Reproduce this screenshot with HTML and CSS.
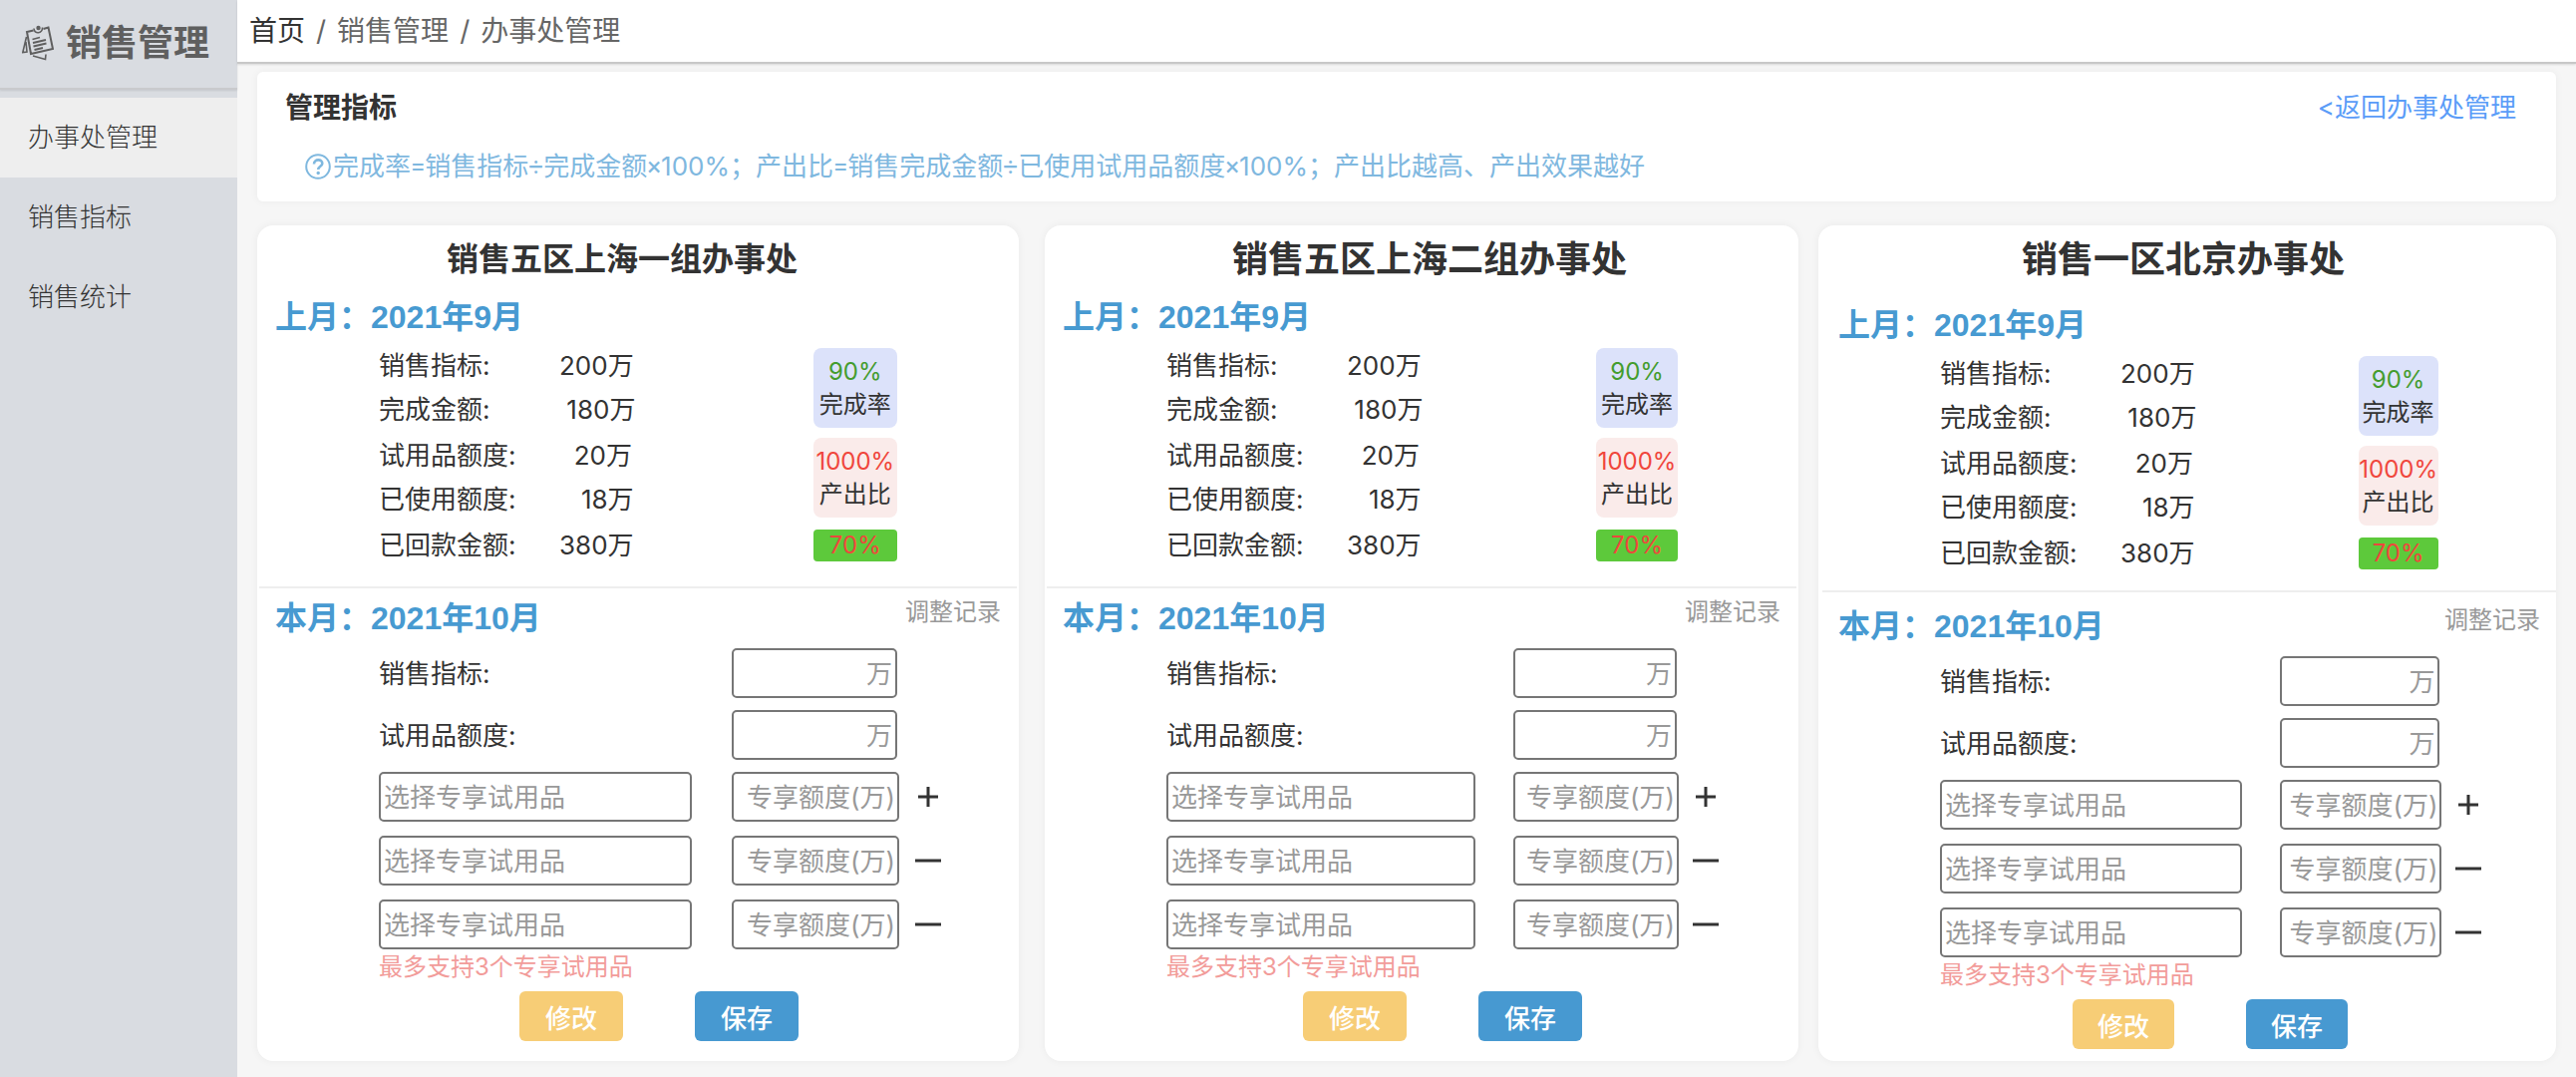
FILE: index.html
```html
<!DOCTYPE html>
<html lang="zh-CN">
<head>
<meta charset="utf-8">
<meta name="viewport" content="width=device-width, initial-scale=1">
<title>办事处管理</title>
<link rel="stylesheet" href="styles.css">
</head>
<body>
<svg width="0" height="0" class="sprite" aria-hidden="true">
  <symbol id="plus" viewBox="0 0 26 26"><path d="M3 13H23M13 3V23" stroke="currentColor" stroke-width="3" fill="none"/></symbol>
  <symbol id="minus" viewBox="0 0 26 26"><path d="M0 13H26" stroke="currentColor" stroke-width="3" fill="none"/></symbol>
</svg>
<div class="layout">
  <aside class="sidebar">
    <div class="brand">
      <svg class="brand-icon" viewBox="0 0 32 36" fill="none" stroke="currentColor" stroke-width="2" aria-hidden="true">
        <path d="M11.5 5.5L5 7L9 29L31 24L26.500 2.500L21.500 4"/>
        <path d="M12 3.500C12 9.500 21 9 20.500 2.500" stroke-width="1.600"/>
        <circle cx="16.500" cy="3" r="2.200" fill="currentColor" stroke="none"/>
        <path d="M10.500 14.500L18 12.500M11 18L24 15M11.500 21.500L24.500 18.500M12.500 25L21 23" stroke-width="1.800"/>
        <path d="M4.500 12L0.800 27.500L5 27L4 17" stroke-width="1.600"/>
        <path d="M11 31L23.500 34.500L24 29.500" stroke-width="1.600"/>
      </svg>
      <span class="brand-name">销售管理</span>
    </div>
    <nav class="menu">
      <a class="menu-item menu-item-active" href="#">办事处管理</a>
      <a class="menu-item" href="#">销售指标</a>
      <a class="menu-item" href="#">销售统计</a>
    </nav>
  </aside>
  <div class="content">
    <nav class="breadcrumb">
      <a class="crumb-home" href="#">首页</a><span>/</span><a href="#">销售管理</a><span>/</span><span>办事处管理</span>
    </nav>
    <main class="main">
      <section class="panel">
        <div class="panel-head">
          <h1 class="panel-title">管理指标</h1>
          <a class="back" href="#">&lt;返回办事处管理</a>
        </div>
        <p class="formula">
          <svg class="help-icon" viewBox="0 0 26 26" fill="none" stroke="currentColor" aria-hidden="true">
            <circle cx="13" cy="13" r="11.800" stroke-width="2"/>
            <path d="M9 10.500C9 5 17.500 5.200 17.300 10C17.200 12.800 13.200 12.800 13.200 16" stroke-width="2.600"/>
            <circle cx="13.200" cy="19.500" r="1.700" fill="currentColor" stroke="none"/>
          </svg><span>完成率<span class="op">=</span>销售指标<span class="op">÷</span>完成金额<span class="op">×</span>100%；产出比<span class="op">=</span>销售完成金额<span class="op">÷</span>已使用试用品额度<span class="op">×</span>100%；产出比越高、产出效果越好</span>
        </p>
      </section>

      <div class="cards">
        <article class="card card-first">
          <h2 class="card-title">销售五区上海一组办事处</h2>
          <h3 class="month">上月：2021年9月</h3>
          <div class="stats">
            <div class="group">
              <dl class="pairs"><dt>销售指标:</dt><dd>200万</dd><dt>完成金额:</dt><dd>&nbsp;180万</dd></dl>
              <div class="badge badge-done"><strong>90%</strong><span>完成率</span></div>
            </div>
            <div class="group">
              <dl class="pairs"><dt>试用品额度:</dt><dd>&nbsp;&nbsp;20万</dd><dt>已使用额度:</dt><dd>&nbsp;&nbsp;&nbsp;18万</dd></dl>
              <div class="badge badge-output"><strong>1000%</strong><span>产出比</span></div>
            </div>
            <div class="group">
              <dl class="pairs"><dt>已回款金额:</dt><dd>380万</dd></dl>
              <div class="badge-paid">70%</div>
            </div>
          </div>
          <form class="current">
            <div class="current-head"><h3 class="month-now">本月：2021年10月</h3><a class="log" href="#">调整记录</a></div>
            <div class="field"><label for="t1">销售指标:</label><input class="amount" id="t1" type="text" placeholder="万"></div>
            <div class="field"><label for="q1">试用品额度:</label><input class="amount" id="q1" type="text" placeholder="万"></div>
            <div class="samples">
              <div class="field"><input type="text" aria-label="专享试用品" placeholder="选择专享试用品"><input class="quota" type="text" aria-label="专享额度" placeholder="专享额度(万)"><button class="step" type="button" aria-label="添加"><svg><use href="#plus"/></svg></button></div>
              <div class="field"><input type="text" aria-label="专享试用品" placeholder="选择专享试用品"><input class="quota" type="text" aria-label="专享额度" placeholder="专享额度(万)"><button class="step" type="button" aria-label="删除"><svg><use href="#minus"/></svg></button></div>
              <div class="field"><input type="text" aria-label="专享试用品" placeholder="选择专享试用品"><input class="quota" type="text" aria-label="专享额度" placeholder="专享额度(万)"><button class="step" type="button" aria-label="删除"><svg><use href="#minus"/></svg></button></div>
            </div>
            <p class="limit">最多支持3个专享试用品</p>
            <div class="actions"><button class="btn btn-edit" type="button">修改</button><button class="btn btn-save" type="button">保存</button></div>
          </form>
        </article>

        <article class="card card-second">
          <h2 class="card-title">销售五区上海二组办事处</h2>
          <h3 class="month">上月：2021年9月</h3>
          <div class="stats">
            <div class="group">
              <dl class="pairs"><dt>销售指标:</dt><dd>200万</dd><dt>完成金额:</dt><dd>&nbsp;180万</dd></dl>
              <div class="badge badge-done"><strong>90%</strong><span>完成率</span></div>
            </div>
            <div class="group">
              <dl class="pairs"><dt>试用品额度:</dt><dd>&nbsp;&nbsp;20万</dd><dt>已使用额度:</dt><dd>&nbsp;&nbsp;&nbsp;18万</dd></dl>
              <div class="badge badge-output"><strong>1000%</strong><span>产出比</span></div>
            </div>
            <div class="group">
              <dl class="pairs"><dt>已回款金额:</dt><dd>380万</dd></dl>
              <div class="badge-paid">70%</div>
            </div>
          </div>
          <form class="current">
            <div class="current-head"><h3 class="month-now">本月：2021年10月</h3><a class="log" href="#">调整记录</a></div>
            <div class="field"><label for="t2">销售指标:</label><input class="amount" id="t2" type="text" placeholder="万"></div>
            <div class="field"><label for="q2">试用品额度:</label><input class="amount" id="q2" type="text" placeholder="万"></div>
            <div class="samples">
              <div class="field"><input type="text" aria-label="专享试用品" placeholder="选择专享试用品"><input class="quota" type="text" aria-label="专享额度" placeholder="专享额度(万)"><button class="step" type="button" aria-label="添加"><svg><use href="#plus"/></svg></button></div>
              <div class="field"><input type="text" aria-label="专享试用品" placeholder="选择专享试用品"><input class="quota" type="text" aria-label="专享额度" placeholder="专享额度(万)"><button class="step" type="button" aria-label="删除"><svg><use href="#minus"/></svg></button></div>
              <div class="field"><input type="text" aria-label="专享试用品" placeholder="选择专享试用品"><input class="quota" type="text" aria-label="专享额度" placeholder="专享额度(万)"><button class="step" type="button" aria-label="删除"><svg><use href="#minus"/></svg></button></div>
            </div>
            <p class="limit">最多支持3个专享试用品</p>
            <div class="actions"><button class="btn btn-edit" type="button">修改</button><button class="btn btn-save" type="button">保存</button></div>
          </form>
        </article>

        <article class="card card-loose">
          <h2 class="card-title">销售一区北京办事处</h2>
          <h3 class="month">上月：2021年9月</h3>
          <div class="stats">
            <div class="group">
              <dl class="pairs"><dt>销售指标:</dt><dd>200万</dd><dt>完成金额:</dt><dd>&nbsp;180万</dd></dl>
              <div class="badge badge-done"><strong>90%</strong><span>完成率</span></div>
            </div>
            <div class="group">
              <dl class="pairs"><dt>试用品额度:</dt><dd>&nbsp;&nbsp;20万</dd><dt>已使用额度:</dt><dd>&nbsp;&nbsp;&nbsp;18万</dd></dl>
              <div class="badge badge-output"><strong>1000%</strong><span>产出比</span></div>
            </div>
            <div class="group">
              <dl class="pairs"><dt>已回款金额:</dt><dd>380万</dd></dl>
              <div class="badge-paid">70%</div>
            </div>
          </div>
          <form class="current">
            <div class="current-head"><h3 class="month-now">本月：2021年10月</h3><a class="log" href="#">调整记录</a></div>
            <div class="field"><label for="t3">销售指标:</label><input class="amount" id="t3" type="text" placeholder="万"></div>
            <div class="field"><label for="q3">试用品额度:</label><input class="amount" id="q3" type="text" placeholder="万"></div>
            <div class="samples">
              <div class="field"><input type="text" aria-label="专享试用品" placeholder="选择专享试用品"><input class="quota" type="text" aria-label="专享额度" placeholder="专享额度(万)"><button class="step" type="button" aria-label="添加"><svg><use href="#plus"/></svg></button></div>
              <div class="field"><input type="text" aria-label="专享试用品" placeholder="选择专享试用品"><input class="quota" type="text" aria-label="专享额度" placeholder="专享额度(万)"><button class="step" type="button" aria-label="删除"><svg><use href="#minus"/></svg></button></div>
              <div class="field"><input type="text" aria-label="专享试用品" placeholder="选择专享试用品"><input class="quota" type="text" aria-label="专享额度" placeholder="专享额度(万)"><button class="step" type="button" aria-label="删除"><svg><use href="#minus"/></svg></button></div>
            </div>
            <p class="limit">最多支持3个专享试用品</p>
            <div class="actions"><button class="btn btn-edit" type="button">修改</button><button class="btn btn-save" type="button">保存</button></div>
          </form>
        </article>
      </div>
    </main>
  </div>
</div>
</body>
</html>
```
FILE: styles.css
```css
* { box-sizing: border-box; }
body, h1, h2, h3, p, dl, dd { margin: 0; }
body {
  background: #f6f6f6;
  color: #333;
  font-family: Inter, "Noto Sans CJK SC", sans-serif;
  font-size: 26px;
}
a { color: inherit; text-decoration: none; }
input, button { font: inherit; color: inherit; }
.sprite { display: none; }

.layout { display: flex; min-height: 100vh; }

/* Sidebar */
.sidebar { flex: 0 0 238px; background: #d9dce1; }
.brand {
  display: flex;
  align-items: center;
  gap: 12px;
  height: 90px;
  padding: 0 0 2px 22px;
  border-bottom: 2px solid #c9cacd;
  box-shadow: 0 1px 2px rgba(0, 0, 0, 0.1);
  color: #5f5f5f;
}
.brand-icon { width: 32px; height: 36px; }
.brand-name { font-size: 36px; font-weight: 700; line-height: 48px; }
.menu { padding-top: 8px; }
.menu-item {
  display: block;
  padding-left: 28px;
  line-height: 80px;
  font-weight: 300;
}
.menu-item-active { background: #eee; }

/* Top bar */
.content { flex: 1; min-width: 0; }
.breadcrumb {
  display: flex;
  gap: 11px;
  padding: 0 12px;
  background: #fff;
  border-bottom: 2px solid #c8c8c8;
  box-shadow: 0 1px 2px rgba(0, 0, 0, 0.12);
  color: #666;
  font-size: 28px;
  line-height: 62px;
}
.crumb-home { color: #333; }
.main { padding: 8px 20px 16px; }

/* Formula panel */
.panel {
  padding: 16px 40px 15px 28px;
  background: #fff;
  border-radius: 6px;
  box-shadow: 0 0 8px rgba(0, 0, 0, 0.05);
}
.panel-head { display: flex; justify-content: space-between; line-height: 40px; }
.panel-title { font-size: 28px; font-weight: 700; }
.back { color: #5a9cf8; }
.formula {
  display: flex;
  align-items: center;
  gap: 2px;
  margin-top: 19px;
  padding-left: 20px;
  color: #7fb8df;
  line-height: 40px;
}
.help-icon { width: 26px; height: 26px; }
.op { font-family: Roboto, sans-serif; }

/* Office cards */
.cards {
  display: grid;
  grid-template-columns: 770fr 756fr 740fr;
  gap: 20px;
  margin-top: 24px;
}
.card {
  padding: 10px 0 12px;
  background: #fff;
  border-radius: 16px;
  box-shadow: 0 0 8px rgba(0, 0, 0, 0.05);
}
.card-title {
  font-size: 36px;
  font-weight: 700;
  line-height: 48px;
  text-align: center;
}
.month, .month-now {
  color: #479ad1;
  font-family: "Liberation Sans", "Noto Sans CJK SC", sans-serif;
  font-size: 32px;
  font-weight: 600;
  line-height: 44px;
}
.month { margin-top: 12px; padding-left: 18px; }

.stats { display: grid; gap: 2px; padding: 5px 16% 19px 122px; }
.group { display: flex; justify-content: space-between; align-items: center; }
.pairs {
  display: grid;
  grid-template-columns: 181px auto;
  line-height: 44px;
  white-space: nowrap;
}
.badge, .badge-paid {
  width: 84px;
  font-size: 24px;
  text-align: center;
}
.badge {
  display: grid;
  padding: 7px 0;
  border-radius: 8px;
  line-height: 33px;
}
.badge strong { font-weight: 400; }
.badge-done { background: #dce2fa; }
.badge-done strong { color: #449c2e; }
.badge-output { background: #faebea; }
.badge-output strong { color: #f0463c; }
.badge-paid {
  background: #5dc93b;
  border-radius: 4px;
  color: #f0463c;
  line-height: 32px;
}

/* Current month form */
.current {
  display: grid;
  gap: 12px;
  margin: 0 2px;
  padding-top: 8px;
  border-top: 2px solid #eee;
}
.current-head {
  display: flex;
  justify-content: space-between;
  align-items: flex-start;
  margin-bottom: -4px;
  padding: 0 16px;
}
.log { color: #999; font-size: 24px; line-height: 32px; }
.field {
  display: grid;
  grid-template-columns: 49% calc(26% + 2px) 1fr;
  column-gap: 38px;
  align-items: center;
  padding-left: 120px;
}
.field label { padding-bottom: 4px; }
.field input {
  width: 100%;
  height: 50px;
  padding: 0 3px;
  background: #fff;
  border: 2px solid #767676;
  border-radius: 5px;
}
.field .amount { width: calc(100% - 2px); text-align: right; }
.field .quota { padding: 0 2px; text-align: right; }
.field input::placeholder { color: #999; opacity: 1; }
.samples { display: grid; gap: 14px; }
.step {
  display: flex;
  width: 26px;
  margin-left: -24px;
  padding: 0;
  background: none;
  border: 0;
}
.step svg { width: 26px; height: 26px; }
.limit {
  margin: -12px 0 -6px;
  padding-left: 120px;
  color: #f29c9a;
  font-size: 24px;
  line-height: 36px;
}
.actions {
  display: flex;
  justify-content: center;
  gap: 72px;
  padding-left: 42px;
}
.btn {
  height: 50px;
  padding: 0 26px;
  border: 0;
  border-radius: 6px;
  color: #fff;
  font-weight: 500;
}
.btn-edit { background: #f7cd76; }
.btn-save { background: #4799d1; }

.card-first { margin-right: 6px; }
.card-first .card-title { padding-right: 32px; font-size: 32px; }
.card-first .field { column-gap: 40px; }

.card-second .card-title { padding-left: 16px; }
.card-second .badge, .card-second .badge-paid { width: 82px; }

.card-loose .card-title { padding-right: 8px; }
.card-loose .month { margin-top: 20px; padding-left: 20px; }
.card-loose .stats { padding-bottom: 15px; }
.card-loose .badge, .card-loose .badge-paid { width: 80px; }
.card-loose .current { margin: 0 0 0 4px; padding-top: 12px; }
.card-loose .field, .card-loose .limit { padding-left: 118px; }
.card-loose .btn { padding: 0 25px; }
```
